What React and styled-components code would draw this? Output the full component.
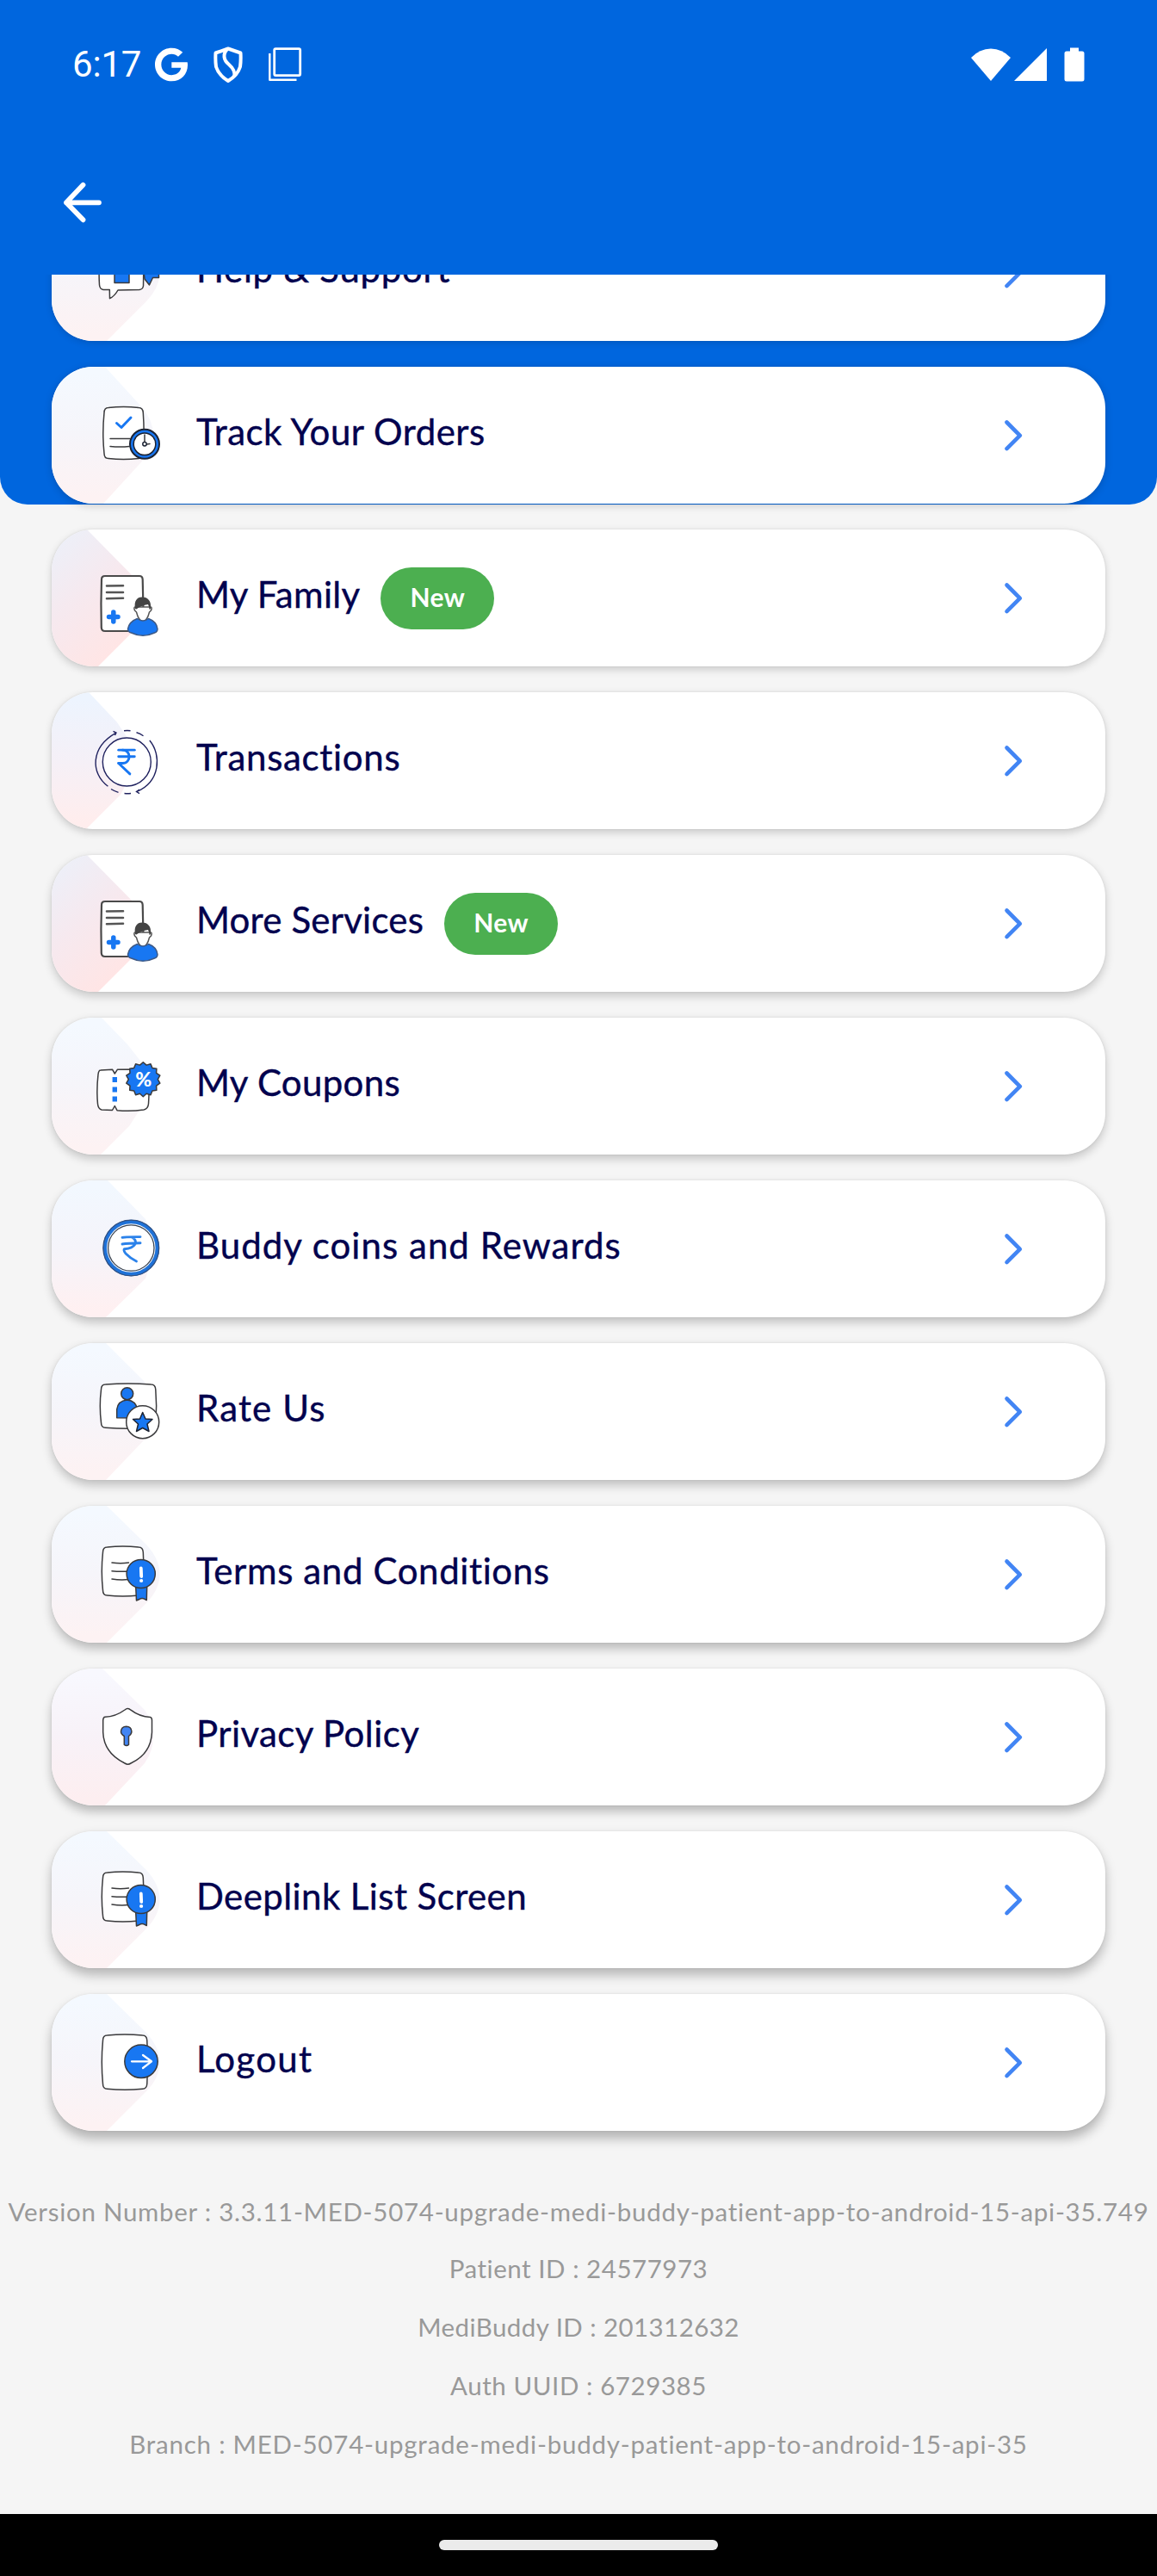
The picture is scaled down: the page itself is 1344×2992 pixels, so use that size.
import React, { useId } from "react";
import styled, { createGlobalStyle } from "styled-components";
import { FaGoogle } from "react-icons/fa";
import { IndianRupee } from "lucide-react";

const GlobalStyle = createGlobalStyle`
  * { box-sizing: border-box; }
  body { margin: 0; background: #f5f5f5; font-family: Lato, "Open Sans", sans-serif; }
`;

const Screen = styled.main`
  width: 1344px;
  height: 2992px;
  display: flex;
  flex-direction: column;
  overflow: hidden;
  background: #f5f5f5;
`;

const Header = styled.header`
  flex: none;
  height: 319px;
  background: #0066de;
  color: #fff;
`;

const StatusBar = styled.div`
  height: 150px;
  display: flex;
  align-items: center;
  justify-content: space-between;
  padding: 0 84px 0 84px;
`;

const StatusGroup = styled.div`
  display: flex;
  align-items: center;
  gap: ${(p) => p.$gap}px;
`;

const Clock = styled.span`
  width: 96px;
  font: 400 42px/1 Roboto, sans-serif;
  letter-spacing: -0.2px;
`;

const TopNav = styled.nav`
  display: flex;
  padding: 60px 72px 0;
`;

const BackButton = styled.button`
  padding: 0;
  border: 0;
  background: none;
  color: inherit;
  line-height: 0;
`;

const ScrollArea = styled.section`
  position: relative;
  flex: 1;
  min-height: 0;
  overflow: hidden;
`;

const Backdrop = styled.div`
  position: absolute;
  inset: 0 0 auto;
  height: 267px;
  border-radius: 0 0 32px 32px;
  background: #0066de;
`;

const List = styled.ul`
  position: relative;
  display: flex;
  flex-direction: column;
  gap: 30px;
  margin: -82px 60px 0;
  padding: 0;
  list-style: none;
`;

const Row = styled.li`
  height: 159px;
  display: flex;
  align-items: center;
  padding-right: 93px;
  border-radius: 48px;
  overflow: hidden;
  background: #fff;
`;

const Art = styled.svg`
  flex: none;
  width: 140px;
  height: 159px;
  margin-right: 28px;
`;

const Label = styled.span`
  padding-bottom: 10px;
  font-size: 42px;
  line-height: 50px;
  letter-spacing: ${(p) => p.$track}px;
  color: #02024e;
  -webkit-text-stroke: 0.4px #02024e;
  white-space: nowrap;
`;

const Badge = styled.span`
  width: 132px;
  height: 72px;
  margin: 1px 0 0 24px;
  padding-bottom: 4px;
  display: flex;
  align-items: center;
  justify-content: center;
  border-radius: 36px;
  background: #4caf50;
  color: #fff;
  font-size: 30px;
  font-weight: 700;
  letter-spacing: 0.4px;
`;

const Chevron = styled.svg`
  flex: none;
  margin-left: auto;
`;

const Footer = styled.footer`
  padding-top: 61px;
  color: #999;
  font-size: 29.5px;
  text-align: center;
  white-space: nowrap;
`;

const Info = styled.p`
  margin: 0;
  line-height: ${(p) => p.$height || 68}px;
  letter-spacing: ${(p) => p.$track}px;
`;

const SystemBar = styled.div`
  flex: none;
  height: 72px;
  display: flex;
  align-items: center;
  justify-content: center;
  background: #000;
`;

const HomeHandle = styled.div`
  width: 324px;
  height: 12px;
  border-radius: 6px;
  background: #ebebeb;
`;

const BLUE = "#1877f2";
const line = { stroke: "#3a3a3c", strokeWidth: 1.5, strokeLinejoin: "round", strokeLinecap: "round" };
const paper = { ...line, fill: "#fff" };
const solid = { ...line, fill: BLUE };

/* Sheet of paper with slightly bowed edges */
const Sheet = ({ l, t, r, b }) => (
  <path
    {...paper}
    d={`M${l + 6} ${t + 1} Q${(l + r) / 2} ${t - 1} ${r - 6} ${t + 1} Q${r - 1} ${t + 1} ${r - 0.7} ${t + 7}
      Q${r + 1} ${(t + b) / 2} ${r - 0.7} ${b - 7} Q${r - 1} ${b - 1} ${r - 6} ${b - 1}
      Q${(l + r) / 2} ${b + 1} ${l + 6} ${b - 1} Q${l + 1} ${b - 1} ${l + 1} ${b - 7}
      Q${l - 1.4} ${(t + b) / 2} ${l + 1} ${t + 7} Q${l + 1} ${t + 1} ${l + 6} ${t + 1}Z`}
  />
);

const HelpIcon = () => (
  <>
    <path {...solid} d="M104 50H124.500V85.500H117.500L113.500 94L108 87Z" />
    <path {...paper} d="M58 46H106Q107 70 106.500 95Q106 99 102 99.500L77 100Q73 107 67.500 109.700L67.300 99.500H60Q56 99 55.500 94Q54 70 58 46Z" />
    <path {...solid} d="M73 91.500V80Q74 70 81 70Q89 70 90 80V91.500Z" />
  </>
);

const TrackIcon = () => (
  <>
    <Sheet l={60} t={46.5} r={107} b={107.5} />
    <path d="M75.500 65.500L81 70.500L92 59" fill="none" stroke={BLUE} strokeWidth="3" strokeLinecap="round" strokeLinejoin="round" />
    <path {...line} fill="none" d="M68 83.500H91M68 92.500Q80 93.500 90 92.500" />
    <circle {...solid} stroke="#1c2333" strokeWidth="2" cx="108" cy="89.800" r="17" />
    <circle {...paper} stroke="#1c2333" cx="108" cy="89.800" r="12.800" />
    <path {...line} fill="none" d="M108 79V87M110.500 90L114 89.500" />
    <circle {...paper} stroke="#1c2333" cx="108" cy="89.800" r="2.200" />
  </>
);

const PersonIcon = () => (
  <>
    <path {...paper} stroke="#4a4a4a" strokeWidth="2.200" d="M62 54H102Q105.500 54 105.700 58L107 118H62Q58 118 57.800 114Q57 86 58 58Q58 54 62 54Z" />
    <path d="M64 65.500L83 65.200M64 73H83M64 80.200L83 79.800" stroke="#555" strokeWidth="2.600" strokeLinecap="round" />
    <path d="M71.800 96V107M66.500 101.500H77" stroke={BLUE} strokeWidth="5.500" strokeLinecap="round" />
    <path {...paper} stroke="#555" d="M97 90Q95 90 96.500 94L98.500 96Q101 106 106 107Q111 106 113.500 96L115.500 94Q117 90 115 90Z" />
    <path fill="#444" d="M97 92C95.500 83 99 78.500 105 78.500C112 78.500 116 83 115 92L113.500 93Q113.500 90 112 87Q104 88 98.500 92.500Z" />
    <path {...solid} stroke="#3e5a86" d="M99.500 103.500Q103 106 106 106Q109 106 112.500 103.500Q122 107 123 115.500Q123 119 119.500 120Q106 126.500 92.500 120Q88.500 119 88.500 115.500Q90 107 99.500 103.500Z" />
  </>
);

const TransactionsIcon = () => (
  <>
    <circle cx="87.300" cy="81" r="28" fill="#fff" stroke="#20225f" strokeWidth="1.400" />
    <path
      d="M65.400 109.300C45 94 45 64 74.500 47.300M71.500 45.300L75 47L73.500 50
        M84 44.800Q88 44.300 91.500 44.800M98.500 46.800Q103 48 106.500 50.700
        M113.800 56C128 73 126 104 99 115.300M102 113L98.500 115.500L102 117.700
        M69 112.500Q73 115 77.500 116.300M84.500 117.500Q88 118 92 117.500"
      fill="none" stroke="#20225f" strokeWidth="1.400"
    />
    <IndianRupee x={68.5} y={62.5} width={37} height={37} color={BLUE} strokeWidth={1.9} />
  </>
);

const scallops = (cx, cy, outer, inner, count) =>
  Array.from({ length: count * 2 }, (_, i) => {
    const a = (Math.PI * i) / count - Math.PI / 2;
    const r = i % 2 ? inner : outer;
    return `${(cx + r * Math.cos(a)).toFixed(1)},${(cy + r * Math.sin(a)).toFixed(1)}`;
  }).join(" ");

const CouponIcon = () => (
  <>
    <path {...paper} d="M57 61L70.500 60.200L73.300 65L76.500 60.200L108 60Q113 61 113 67Q113.500 85 112.500 100Q112 106 107 107Q92 109 76 107.700L73.300 102.500L70.500 107.500L58 107Q54 106 53.500 100Q52 84 54 66Q54.500 61 57 61Z" />
    <path d="M73.300 69V75M73.300 80.500V86.500M73.300 91.500V97.500" stroke={BLUE} strokeWidth="5.400" />
    <polygon {...solid} points={scallops(106.300, 71.700, 20, 17, 14)} />
    <text x="106.700" y="79.500" textAnchor="middle" fontFamily="Lato, sans-serif" fontSize="23" fontWeight="900" fill="#fff">%</text>
  </>
);

const CoinIcon = () => (
  <>
    <circle cx="92.300" cy="78.500" r="30.500" fill="#fff" stroke="#1f72d8" strokeWidth="4.500" />
    <circle cx="92.300" cy="78.500" r="32.400" fill="none" stroke="#34507e" strokeWidth="1.300" />
    <circle cx="92.300" cy="78.500" r="26.700" fill="none" stroke="#3d4654" strokeWidth="1.300" />
    <path d="M82 66.300Q84 65.500 103 65.600M82 74Q88 73 103 72.700M93 66Q99 69 97 74Q94 79 84.500 79.700Q83 81 86 85Q92 91 98.500 94" fill="none" stroke="#2b82ea" strokeWidth="2.900" strokeLinecap="round" strokeLinejoin="round" />
  </>
);

const RateIcon = () => (
  <>
    <Sheet l={56.5} t={47} r={121.5} b={99.3} />
    <path {...solid} d="M75.700 86.800V77Q77 67 87.500 66Q98 67 99.500 77V87Z" />
    <circle {...solid} cx="87.700" cy="58.700" r="7" />
    <circle {...paper} cx="105.700" cy="91.700" r="19" />
    <polygon {...solid} stroke="#1c2333" points="105.700,80.500 109,88 117,88.500 111,94 113,102.500 105.700,98.500 98.500,102.500 100.500,94 94.500,88.500 102.500,88" />
  </>
);

const NoticeIcon = () => (
  <>
    <Sheet l={58.5} t={47} r={107} b={105} />
    <path {...line} fill="none" d="M70 66Q80 67.500 89.500 66M70 75.800Q80 76.800 90 76M70 85Q80 86.500 89.500 85.500" />
    <path {...solid} d="M97.700 94H110.700L110.300 109.500L107 107.800Q104 107 102 108.500L98.500 110Z" />
    <circle {...solid} cx="103.700" cy="79" r="16.600" />
    <path d="M103.800 72.500L104.200 82" stroke="#fff" strokeWidth="3.800" strokeLinecap="round" />
    <circle cx="104.100" cy="87" r="2.100" fill="#fff" />
  </>
);

const ShieldIcon = () => (
  <>
    <path {...paper} d="M88.300 46.400Q90 46.200 92 48.200Q102 56 114.500 56.400Q116.500 57 116.500 60V74Q115.500 99 92 110Q88.500 112.300 85 110Q60.500 98 59.700 74V60Q60 56.500 62 56.300Q74 56 85 48Q87 46.200 88.300 46.400Z" />
    <path {...solid} fill="#4285f4" d="M84.300 78.500Q80.300 76 80.500 73Q81 67.300 86.700 67.200Q92.500 67.300 92.900 73Q93 76 89.500 78.500V88.500Q87 90.500 84.300 88.500Z" />
  </>
);

const LogoutIcon = () => (
  <>
    <Sheet l={58.5} t={47} r={111.5} b={111.3} />
    <circle {...solid} cx="104" cy="78.300" r="19.200" />
    <path d="M93 78.300H116M106 71L116 78.300L106 86" fill="none" stroke="#fff" strokeWidth="2.300" strokeLinecap="round" strokeLinejoin="round" />
  </>
);

const softTint = ["#f4f9ff", "#f6f5fa", "#fdf2f3"];
const roundTip = "M0 0H64L110 45Q125.500 62 125.500 79.500Q125.500 97 110 113L64 159H0Z";
const familyShape = "M0 0H41L104 64Q110 84 104 109L54 159H0Z";
const familyTint = ["#ecf0f9", "#f6e9ef", "#ffe5e5"];

const items = [
  { label: "Help & Support", track: 0.7, Icon: HelpIcon },
  { label: "Track Your Orders", track: 0.5, Icon: TrackIcon, shape: "M0 0H62L104 46Q118 62 118 79Q118 96 103 112L60 159H0Z" },
  { label: "My Family", track: 0.3, Icon: PersonIcon, badge: "New", shape: familyShape, tint: familyTint, slant: true },
  { label: "Transactions", track: 0.68, Icon: TransactionsIcon, shape: "M0 0H43L76 35L90 56V100L80 119L40 159H0Z", tint: ["#edf4fe", "#f5f0f7", "#ffeded"] },
  { label: "More Services", track: 0.2, Icon: PersonIcon, badge: "New", shape: familyShape, tint: familyTint, slant: true },
  { label: "My Coupons", track: 0.33, Icon: CouponIcon, shape: "M0 0H58L88 31L103 50V106L90 126L57 159H0Z" },
  { label: "Buddy coins and Rewards", track: 1.04, Icon: CoinIcon, shape: "M0 0H65L109 45Q122 80 109 114L63 159H0Z", tint: ["#f2f8ff", "#f5f4fa", "#fff0f1"] },
  { label: "Rate Us", track: 1.15, Icon: RateIcon, shape: "M0 0H63L108 45Q120 60 120 79Q120 97 106 114L63 159H0Z" },
  { label: "Terms and Conditions", track: 0.62, Icon: NoticeIcon, shape: roundTip },
  { label: "Privacy Policy", track: 0.42, Icon: ShieldIcon, shape: "M0 0H59L108 48Q118 62 118 79Q118 96 108 110L62 159H0Z", tint: ["#f8f8fe", "#f8f2f8", "#fdeef0"] },
  { label: "Deeplink List Screen", track: 0.42, Icon: NoticeIcon, shape: roundTip },
  { label: "Logout", track: 1.3, Icon: LogoutIcon, shape: roundTip },
];

/* Elevation shadows lengthen toward the bottom of the screen */
const elevation = (i) =>
  `0 ${(2 + i * 0.55).toFixed(1)}px ${(9 + i * 0.35).toFixed(1)}px rgba(0,0,0,${(0.14 + i * 0.012).toFixed(3)}), 0 0 3px rgba(0,0,0,0.08)`;

function MenuRow({ item, index }) {
  const id = useId();
  const { label, track, Icon, badge, shape = roundTip, tint = softTint, slant } = item;
  return (
    <Row style={{ boxShadow: elevation(index) }}>
      <Art viewBox="0 0 140 159">
        <defs>
          <linearGradient id={id} x1="0" y1="0" x2={slant ? 0.6 : 0} y2="1">
            <stop offset="0.05" stopColor={tint[0]} />
            <stop offset="0.5" stopColor={tint[1]} />
            <stop offset="0.95" stopColor={tint[2]} />
          </linearGradient>
        </defs>
        <path d={shape} fill={`url(#${id})`} />
        <Icon />
      </Art>
      <Label $track={track}>{label}</Label>
      {badge && <Badge>{badge}</Badge>}
      <Chevron width="26" height="40" viewBox="0 0 26 40" fill="none" stroke="#4285f4" strokeWidth="4.600" strokeLinecap="round" strokeLinejoin="round">
        <path d="M4.500 4.500L19.800 19.800L4.500 35.100" />
      </Chevron>
    </Row>
  );
}

export default function App() {
  return (
    <>
      <GlobalStyle />
      <Screen>
        <Header>
          <StatusBar>
            <StatusGroup $gap={0}>
              <Clock>6:17</Clock>
              <FaGoogle style={{ width: 38, height: 40 }} />
              <svg width="94" height="44" viewBox="0 0 94 44" fill="none" stroke="#fff" strokeLinejoin="round">
                <path strokeWidth="4" d="M47 3.500L61.500 8.500Q62 17.500 61 24.500Q58 34.500 47 41Q36 34.500 33 24.500Q32 17.500 32.500 8.500Z" />
                <path strokeWidth="4" d="M46 4Q42 8 42.500 13Q43 18 48 22Q56 29 54 36" />
              </svg>
              <svg width="40" height="42" viewBox="0 0 40 42" fill="none" stroke="#fff" strokeLinejoin="round">
                <rect x="6.700" y="2.600" width="30" height="31" rx="1.500" strokeWidth="2.800" />
                <path strokeWidth="2.400" d="M1.300 8V38.700H32.500" />
              </svg>
            </StatusGroup>
            <StatusGroup $gap={4}>
              <svg width="46" height="38" viewBox="0 0 46 38"><path fill="#fff" d="M0 11Q10 0.500 23 0.500T46 11L23 38Z" /></svg>
              <svg width="38" height="38" viewBox="0 0 38 38"><path fill="#fff" d="M38 0V38H0Z" /></svg>
              <svg width="40" height="40" viewBox="0 0 40 40"><path fill="#fff" d="M23 0.500H33V4.500H37Q39.500 4.500 39.500 7V37Q39.500 39.500 37 39.500H19Q16.500 39.500 16.500 37V7Q16.500 4.500 19 4.500H23Z" /></svg>
            </StatusGroup>
          </StatusBar>
          <TopNav>
            <BackButton aria-label="Back">
              <svg width="48" height="50" viewBox="0 0 48 50" fill="none" stroke="#fff" strokeWidth="5.800" strokeLinecap="round" strokeLinejoin="round">
                <path d="M24.500 4.800L5 25.300L24.500 45.300M5 25.300H43" />
              </svg>
            </BackButton>
          </TopNav>
        </Header>
        <ScrollArea>
          <Backdrop />
          <List>
            {items.map((item, i) => (
              <MenuRow key={item.label} item={item} index={i} />
            ))}
          </List>
          <Footer>
            <Info $height={65} $track={0.73}>Version Number : 3.3.11-MED-5074-upgrade-medi-buddy-patient-app-to-android-15-api-35.749</Info>
            <Info $track={0.53}>Patient ID : 24577973</Info>
            <Info $track={0.43}>MediBuddy ID : 201312632</Info>
            <Info $track={0.58}>Auth UUID : 6729385</Info>
            <Info $track={0.77}>Branch : MED-5074-upgrade-medi-buddy-patient-app-to-android-15-api-35</Info>
          </Footer>
        </ScrollArea>
        <SystemBar>
          <HomeHandle />
        </SystemBar>
      </Screen>
    </>
  );
}
